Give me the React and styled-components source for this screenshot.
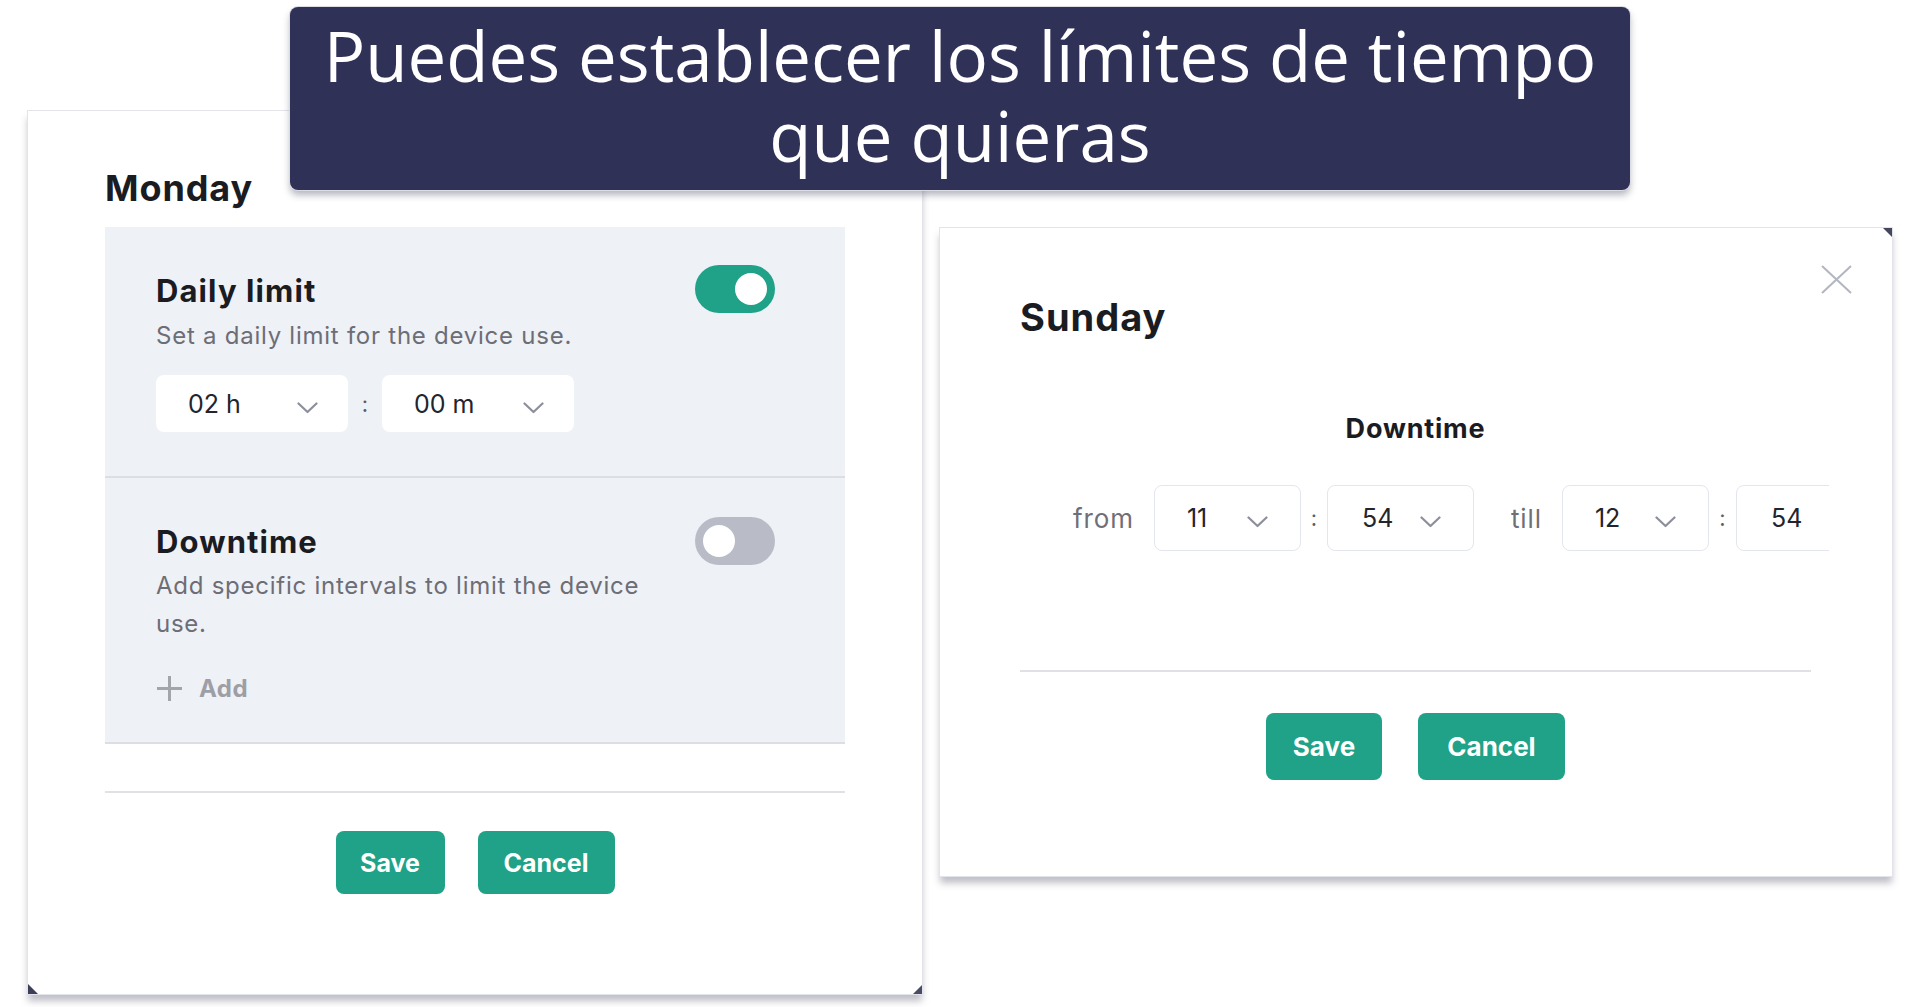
import React from 'react';
import styled, { createGlobalStyle, css } from 'styled-components';

const Global = createGlobalStyle`
  html, body { margin: 0; padding: 0; background: #ffffff; }
  body { font-family: Inter, "Noto Sans", sans-serif; color: #1c1c22; }
  *, *::before, *::after { box-sizing: border-box; }
`;

const Page = styled.div`
  position: relative;
  width: 1919px;
  height: 1007px;
  overflow: hidden;
  display: flex;
  align-items: flex-start;
  gap: 16px;
  padding-left: 27px;
`;

const Banner = styled.div`
  position: absolute;
  left: 290px;
  top: 7px;
  width: 1340px;
  height: 183px;
  z-index: 2;
  background: #2f3156;
  border-radius: 8px;
  box-shadow: 0 0 0 1px #dcdde4, 0 5px 7px rgba(40, 42, 70, 0.35);
  color: #ffffff;
  font-family: "Open Sans", Lato, sans-serif;
  font-size: 69px;
  font-weight: 500;
  line-height: 80px;
  text-align: center;
  padding: 8px 20px 0;
`;

const cornerBL = css`
  &::before {
    content: '';
    position: absolute;
    left: 0;
    bottom: 0;
    border-style: solid;
    border-width: 10px 0 0 10px;
    border-color: transparent transparent transparent #3d3f58;
  }
  &::after {
    content: '';
    position: absolute;
    right: 0;
    bottom: 0;
    border-style: solid;
    border-width: 0 0 9px 9px;
    border-color: transparent transparent #4a4c63 transparent;
  }
`;

const cornerTR = css`
  &::after {
    content: '';
    position: absolute;
    right: 0;
    top: 0;
    border-style: solid;
    border-width: 0 9px 9px 0;
    border-color: transparent #44465d transparent transparent;
  }
`;

const Window = styled.section`
  position: relative;
  margin-top: ${(p) => p.$top}px;
  width: ${(p) => p.$w}px;
  height: ${(p) => p.$h}px;
  flex: none;
  background: #ffffff;
  border: 1px solid #e3e4ea;
  box-shadow: 0 7px 7px -1px rgba(70, 72, 95, 0.35);
  padding: 0 ${(p) => p.$pr}px 0 ${(p) => p.$pl}px;
  display: flex;
  flex-direction: column;
  ${(p) => (p.$corner === 'bottom' ? cornerBL : cornerTR)}
`;

const DayTitle = styled.h2`
  margin: ${(p) => p.$mt}px 0 0;
  font-size: ${(p) => p.$fs}px;
  line-height: 44px;
  font-weight: 700;
  color: #1b1b22;
  letter-spacing: ${(p) => p.$ls}px;
`;

const Card = styled.div`
  margin-top: 17px;
  background: #eef1f6;
  display: flex;
  flex-direction: column;
`;

const Section = styled.div`
  height: ${(p) => p.$h}px;
  padding: ${(p) => p.$pt}px 70px 0 51px;
  border-bottom: 2px solid #dddee3;
  display: flex;
  justify-content: space-between;
  align-items: flex-start;
`;

const TextCol = styled.div`
  display: flex;
  flex-direction: column;
  align-items: flex-start;
`;

const SectionTitle = styled.h3`
  margin: ${(p) => p.$mt}px 0 0;
  font-size: 31px;
  line-height: 34px;
  font-weight: 700;
  color: #1b1b22;
  letter-spacing: 1.1px;
`;

const Desc = styled.p`
  margin: ${(p) => p.$mt}px 0 0;
  max-width: 510px;
  font-size: 24px;
  line-height: 38px;
  color: #6d6d76;
  letter-spacing: 0.75px;
`;

const TimeRow = styled.div`
  margin-top: 20px;
  display: flex;
  align-items: center;
`;

const SelectBox = styled.div`
  width: ${(p) => p.$w}px;
  height: ${(p) => p.$h}px;
  flex: none;
  background: #ffffff;
  border: 1px solid ${(p) => p.$border};
  border-radius: 8px;
  padding: 0 ${(p) => p.$pr}px 0 ${(p) => p.$pl}px;
  display: flex;
  align-items: center;
  justify-content: space-between;
  font-size: 25px;
  color: #24242c;
`;

const Colon = styled.span`
  width: ${(p) => p.$w}px;
  flex: none;
  text-align: center;
  font-size: 22px;
  color: #5b5b63;
`;

const Toggle = styled.div`
  position: relative;
  width: 80px;
  height: 48px;
  flex: none;
  border-radius: 24px;
  background: ${(p) => (p.$on ? '#1fa287' : '#b9bbc7')};
  &::after {
    content: '';
    position: absolute;
    top: 8px;
    left: ${(p) => (p.$on ? '40px' : '8px')};
    width: 32px;
    height: 32px;
    border-radius: 50%;
    background: #ffffff;
  }
`;

const AddRow = styled.div`
  margin-top: 31px;
  display: flex;
  align-items: center;
  gap: 16px;
  font-size: 24px;
  font-weight: 700;
  color: #9d9ea6;
  letter-spacing: 0.5px;
`;

const Divider = styled.div`
  margin-top: ${(p) => p.$mt}px;
  height: 2px;
  background: #e0e1e6;
`;

const ButtonRow = styled.div`
  margin-top: ${(p) => p.$mt}px;
  display: flex;
  justify-content: center;
  gap: ${(p) => p.$gap}px;
`;

const Button = styled.button`
  height: ${(p) => p.$h}px;
  width: ${(p) => p.$w}px;
  border: none;
  border-radius: 8px;
  background: #1fa287;
  color: #ffffff;
  font-family: Inter, sans-serif;
  font-size: ${(p) => p.$fs}px;
  font-weight: 700;
  letter-spacing: 0px;
  padding: 0;
`;

const CloseButton = styled.div`
  position: absolute;
  top: 37px;
  right: 40px;
  width: 31px;
  height: 29px;
  display: flex;
`;

const CenterHeading = styled.h3`
  margin: 74px 0 0;
  text-align: center;
  font-size: 27px;
  line-height: 32px;
  font-weight: 700;
  color: #1b1b22;
  letter-spacing: 0.8px;
`;

const RowClip = styled.div`
  margin: 40px -18px 0 0;
  padding-left: 53px;
  overflow: hidden;
`;

const IntervalRow = styled.div`
  display: flex;
  align-items: center;
  width: max-content;
`;

const Label = styled.span`
  margin: 0 20px 0 ${(p) => p.$ml || 0}px;
  font-size: 26px;
  letter-spacing: 0.9px;
  color: #6f6f78;
`;

const Chevron = () => (
  <svg width="21" height="12" viewBox="0 0 21 12" style={{ marginTop: 8 }}>
    <polyline points="1.5,1.5 10.5,10 19.5,1.5" fill="none" stroke="#8c8f9b" strokeWidth="2.2" strokeLinecap="round" strokeLinejoin="round" />
  </svg>
);

const PlusIcon = () => (
  <svg width="27" height="27" viewBox="0 0 27 27">
    <line x1="13.5" y1="1" x2="13.5" y2="26" stroke="#a3a4ac" strokeWidth="3" />
    <line x1="1" y1="13.5" x2="26" y2="13.5" stroke="#a3a4ac" strokeWidth="3" />
  </svg>
);

const CloseIcon = () => (
  <svg width="31" height="29" viewBox="0 0 31 29">
    <line x1="1" y1="1" x2="30" y2="28" stroke="#b3b5bf" strokeWidth="2" />
    <line x1="30" y1="1" x2="1" y2="28" stroke="#b3b5bf" strokeWidth="2" />
  </svg>
);

const DailySelect = ({ value }) => (
  <SelectBox $w={192} $h={57} $border="transparent" $pl={31} $pr={29}>
    <span>{value}</span>
    <Chevron />
  </SelectBox>
);

const IntervalSelect = ({ value, pl = 32 }) => (
  <SelectBox $w={147} $h={66} $border="#e4e6ee" $pl={pl} $pr={32}>
    <span>{value}</span>
    <Chevron />
  </SelectBox>
);

export default function App() {
  return (
    <>
      <Global />
      <Page>
        <Banner>Puedes establecer los límites de tiempo que quieras</Banner>

        <Window $top={110} $w={896} $h={885} $pl={77} $pr={77} $corner="bottom">
          <DayTitle $mt={55} $fs={36} $ls={0.9}>Monday</DayTitle>
          <Card>
            <Section $h={251} $pt={38}>
              <TextCol>
                <SectionTitle $mt={9}>Daily limit</SectionTitle>
                <Desc $mt={9}>Set a daily limit for the device use.</Desc>
                <TimeRow>
                  <DailySelect value="02 h" />
                  <Colon $w={34}>:</Colon>
                  <DailySelect value="00 m" />
                </TimeRow>
              </TextCol>
              <Toggle $on />
            </Section>
            <Section $h={266} $pt={39}>
              <TextCol>
                <SectionTitle $mt={8}>Downtime</SectionTitle>
                <Desc $mt={8}>Add specific intervals to limit the device use.</Desc>
                <AddRow>
                  <PlusIcon />
                  <span>Add</span>
                </AddRow>
              </TextCol>
              <Toggle />
            </Section>
          </Card>
          <Divider $mt={47} />
          <ButtonRow $mt={38} $gap={33}>
            <Button $h={63} $w={109} $fs={25}>Save</Button>
            <Button $h={63} $w={137} $fs={25}>Cancel</Button>
          </ButtonRow>
        </Window>

        <Window $top={227} $w={954} $h={650} $pl={80} $pr={81} $corner="top">
          <CloseButton>
            <CloseIcon />
          </CloseButton>
          <DayTitle $mt={67} $fs={38} $ls={1}>Sunday</DayTitle>
          <CenterHeading>Downtime</CenterHeading>
          <RowClip>
            <IntervalRow>
              <Label>from</Label>
              <IntervalSelect value="11" />
              <Colon $w={26}>:</Colon>
              <IntervalSelect value="54" pl={34} />
              <Label $ml={37}>till</Label>
              <IntervalSelect value="12" />
              <Colon $w={27}>:</Colon>
              <IntervalSelect value="54" pl={34} />
            </IntervalRow>
          </RowClip>
          <Divider $mt={119} />
          <ButtonRow $mt={41} $gap={36}>
            <Button $h={67} $w={116} $fs={26}>Save</Button>
            <Button $h={67} $w={147} $fs={26}>Cancel</Button>
          </ButtonRow>
        </Window>
      </Page>
    </>
  );
}
